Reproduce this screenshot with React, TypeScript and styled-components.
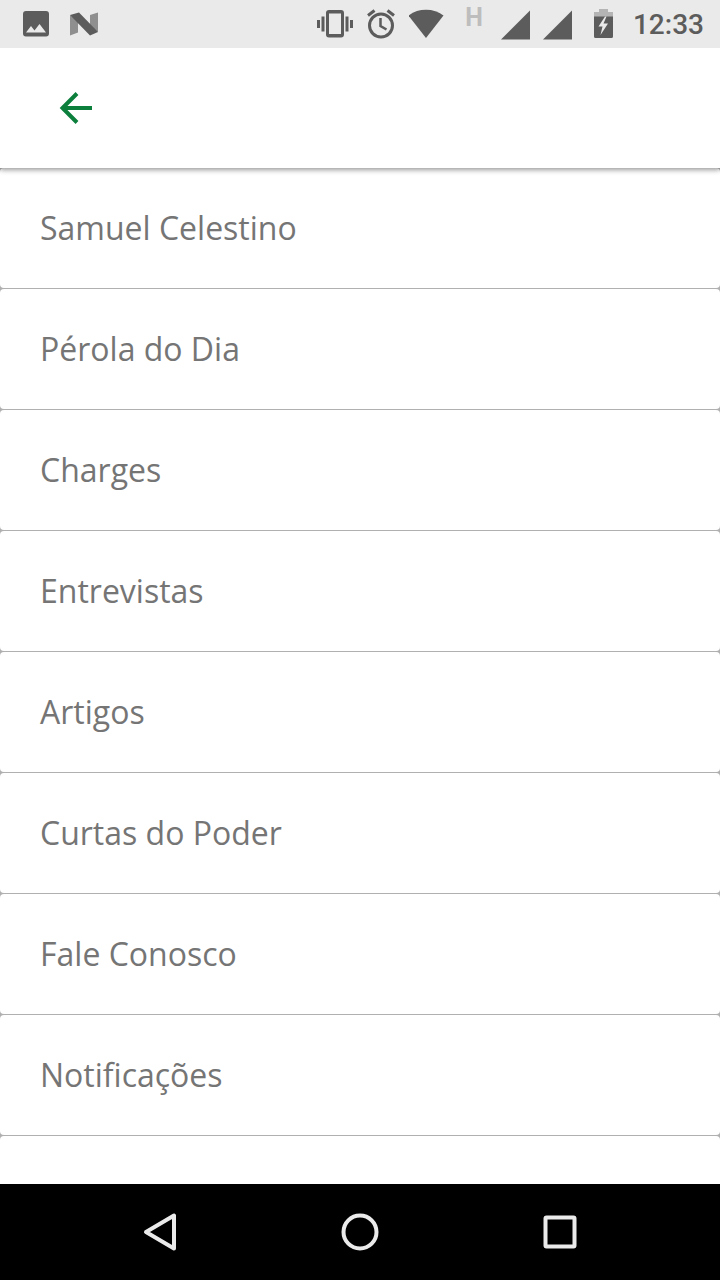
import React from "react";
import styled, { createGlobalStyle } from "styled-components";

const GlobalStyle = createGlobalStyle`
  * { box-sizing: border-box; }
  body { margin: 0; background: #fff; }
`;

const Screen = styled.div`
  display: flex;
  flex-direction: column;
  min-height: 100vh;
  background: #fff;
  font-family: "Open Sans", "Noto Sans", sans-serif;
`;

const StatusBar = styled.div`
  display: flex;
  justify-content: space-between;
  height: 48px;
  padding: 0 16px 0 20px;
  background: #eaeaea;
  color: #5c5c5c;
  font-family: Roboto, sans-serif;
`;

const StatusGroup = styled.div<{ $gap: number }>`
  display: flex;
  gap: ${(p) => p.$gap}px;
`;

const StatusIcon = styled.svg`
  display: block;
  height: 48px;
  fill: currentColor;
`;

const NetworkType = styled.span`
  width: 36px;
  padding-left: 2px;
  color: #bdbdbd;
  font-size: 25px;
  font-weight: 700;
  line-height: 36px;
  text-align: center;
`;

const Clock = styled.time`
  min-width: 73px;
  font-size: 28px;
  font-weight: 500;
  line-height: 50px;
  text-align: right;
`;

const Toolbar = styled.header`
  position: relative;
  z-index: 1;
  display: flex;
  align-items: center;
  height: 120px;
  padding: 0 52px;
  background: #fff;
  box-shadow: 0 2px 5px rgba(0, 0, 0, 0.4);
  clip-path: inset(0 0 -12px 0);
`;

const BackButton = styled.button`
  display: flex;
  padding: 0;
  border: 0;
  background: none;
  color: #0c7f3d;
  cursor: pointer;
`;

const Menu = styled.ul`
  flex: 1;
  display: flex;
  flex-direction: column;
  gap: 1px;
  margin: 0;
  padding: 0;
  background: #b0b0b0;
  list-style: none;
`;

const MenuItem = styled.li`
  border-radius: 4px;
  background: #fff;
`;

const MenuLink = styled.a`
  display: flex;
  align-items: center;
  height: 120px;
  padding: 0 40px;
  color: #757575;
  font-size: 32px;
  line-height: 44px;
  text-decoration: none;
`;

const MenuEnd = styled.li`
  flex: 1;
  min-height: 48px;
  border-radius: 4px 4px 0 0;
  background: #fff;
`;

const NavBar = styled.nav`
  display: flex;
  height: 96px;
  padding: 0 60px;
  background: #000;
`;

const NavButton = styled.button`
  flex: 1;
  display: flex;
  align-items: center;
  justify-content: center;
  padding: 0;
  border: 0;
  background: none;
  color: #ebebeb;
  cursor: pointer;
`;

const NavIcon = styled.svg`
  width: 48px;
  height: 48px;
  fill: none;
  stroke: currentColor;
  stroke-width: 4;
  stroke-linejoin: round;
`;

const items = [
  "Samuel Celestino",
  "Pérola do Dia",
  "Charges",
  "Entrevistas",
  "Artigos",
  "Curtas do Poder",
  "Fale Conosco",
  "Notificações",
];

const Signal = () => (
  <StatusIcon width="32" viewBox="0 0 32 48" aria-hidden="true">
    <path d="M0 39.500L29 10.500V39.500Z" />
  </StatusIcon>
);

export default function App() {
  return (
    <>
      <GlobalStyle />
      <Screen>
        <StatusBar>
          <StatusGroup $gap={16}>
            <StatusIcon width="32" viewBox="0 0 32 48" aria-hidden="true">
              <path
                fillRule="evenodd"
                d="M6 11H26a3 3 0 0 1 3 3V33.500a3 3 0 0 1-3 3H6a3 3 0 0 1-3-3V14a3 3 0 0 1 3-3ZM6 32.500H26L19.500 24L14.500 30.500L11 26Z"
              />
            </StatusIcon>
            <StatusIcon width="32" viewBox="0 0 32 48" aria-hidden="true">
              <path fill="#8f8f8f" d="M2 15L10 21V32.500L2 35.500ZM22 15L30 12.500V32L22 27Z" />
              <path d="M2 15L11 12.500L30 32L22 35.500Z" />
            </StatusIcon>
          </StatusGroup>
          <StatusGroup $gap={10}>
            <StatusIcon width="36" viewBox="0 0 36 48" aria-hidden="true">
              <path
                fillRule="evenodd"
                d="M12 10H24a3 3 0 0 1 3 3V34.500a3 3 0 0 1-3 3H12a3 3 0 0 1-3-3V13a3 3 0 0 1 3-3ZM12 13.500V34H24V13.500ZM0 20H3V28H0ZM4.500 16.500H7.500V31.500H4.500ZM28.500 16.500H31.500V31.500H28.500ZM33 20H36V28H33Z"
              />
            </StatusIcon>
            <StatusIcon width="36" viewBox="0 0 36 48" aria-hidden="true">
              <g fill="none" stroke="currentColor" strokeWidth="3">
                <circle cx="18" cy="25.500" r="11.500" />
                <path d="M5 15.500L11.500 10.500M31 15.500L24.500 10.500" />
                <path strokeWidth="2.500" d="M17.500 18V26L23.500 29.500" />
              </g>
            </StatusIcon>
            <StatusIcon width="36" viewBox="0 0 36 48" aria-hidden="true">
              <path d="M17 38L-0.500 15.500Q7 9.800 17 9.800T34.500 15.500Z" />
            </StatusIcon>
            <NetworkType>H</NetworkType>
            <Signal />
            <Signal />
            <StatusIcon width="36" viewBox="0 0 36 48" aria-hidden="true">
              <path fill="#b4b4b4" d="M14 9H23V12H28V17H9V12H14Z" />
              <path
                fillRule="evenodd"
                d="M9 16.500H28V36.500a1.500 1.500 0 0 1-1.500 1.500H10.500A1.500 1.500 0 0 1 9 36.500ZM20 16.500L13.500 26.500H17.500L15.500 35L23 23.500H18.500L21.500 16.500Z"
              />
            </StatusIcon>
            <Clock>12:33</Clock>
          </StatusGroup>
        </StatusBar>
        <Toolbar>
          <BackButton type="button" aria-label="Voltar">
            <svg
              width="48"
              height="48"
              viewBox="0 0 48 48"
              fill="none"
              stroke="currentColor"
              strokeWidth="4"
              aria-hidden="true"
            >
              <path d="M40 24H11M25 9.500L10.500 24L25 38.500" />
            </svg>
          </BackButton>
        </Toolbar>
        <Menu>
          {items.map((label) => (
            <MenuItem key={label}>
              <MenuLink href="#">{label}</MenuLink>
            </MenuItem>
          ))}
          <MenuEnd aria-hidden="true" />
        </Menu>
        <NavBar>
          <NavButton type="button" aria-label="Voltar">
            <NavIcon viewBox="0 0 48 48" aria-hidden="true">
              <path d="M10 24L38 7.500V40.500Z" />
            </NavIcon>
          </NavButton>
          <NavButton type="button" aria-label="Início">
            <NavIcon viewBox="0 0 48 48" aria-hidden="true">
              <circle cx="24" cy="24" r="16.500" />
            </NavIcon>
          </NavButton>
          <NavButton type="button" aria-label="Recentes">
            <NavIcon viewBox="0 0 48 48" aria-hidden="true">
              <rect x="9.500" y="9.500" width="29" height="29" rx="1" />
            </NavIcon>
          </NavButton>
        </NavBar>
      </Screen>
    </>
  );
}
